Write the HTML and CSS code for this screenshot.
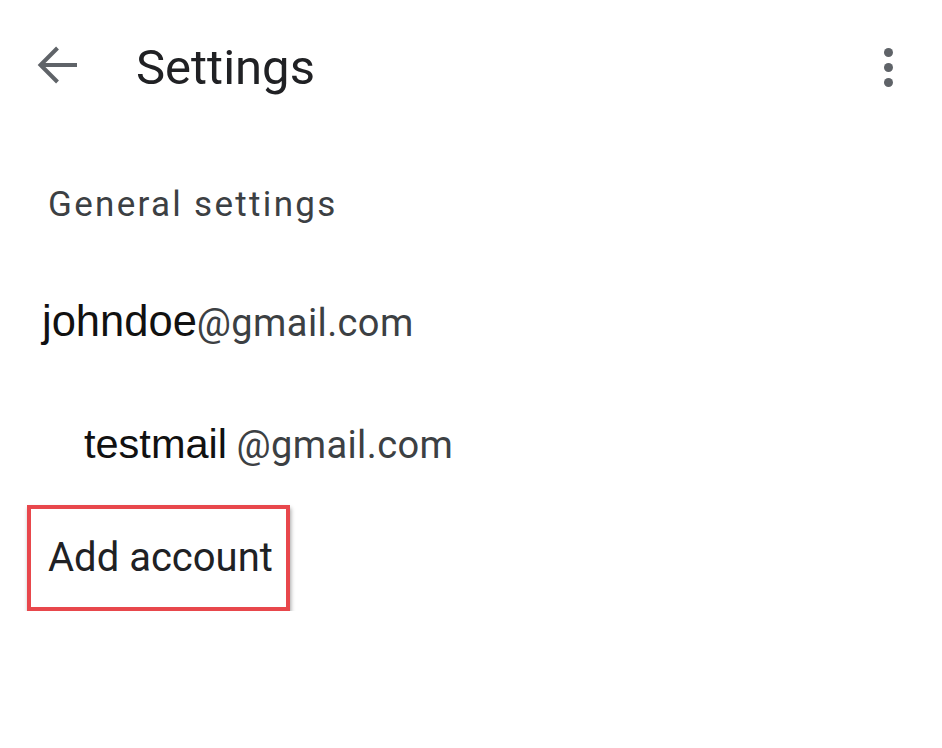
FILE: index.html
```html
<!DOCTYPE html>
<html lang="en">
<head>
    <meta charset="UTF-8">
    <meta name="viewport" content="width=device-width, initial-scale=1.0">
    <title>Settings</title>
    <link rel="stylesheet" href="styles.css">
</head>
<body>
    <div class="app-bar">
        <button class="back-button" aria-label="Back">
            <svg width="44" height="44" viewBox="0 0 44 44">
                <path d="M42 20H6M22.5 3L5.5 20L22.5 37" fill="none" stroke="#5f6368" stroke-width="4"/>
            </svg>
        </button>
        <h1 class="title">Settings</h1>
        <button class="menu-button" aria-label="More options">
            <span class="dot"></span>
            <span class="dot"></span>
            <span class="dot"></span>
        </button>
    </div>

    <div class="settings-list">
        <div class="item general">General settings</div>
        <div class="item account first"><span class="user">johndoe</span><span class="domain">@gmail.com</span></div>
        <div class="item account second"><span class="user">testmail</span> <span class="domain">@gmail.com</span></div>
        <div class="item add-account">
            <span class="highlight">Add account</span>
        </div>
    </div>
</body>
</html>
```

FILE: styles.css
```css
body {
    margin: 0;
    background-color: #fff;
    font-family: Roboto, "Noto Sans", sans-serif;
    color: #202124;
}

.app-bar {
    display: flex;
    align-items: center;
    height: 134px;
    padding: 0 42px 0 35px;
}

.back-button,
.menu-button {
    border: none;
    background: none;
    padding: 0;
    cursor: pointer;
}

.back-button {
    display: flex;
    width: 44px;
    height: 44px;
}

.title {
    margin: 0 0 0 57px;
    font-size: 49px;
    font-weight: 400;
    flex: 1;
}

.menu-button {
    display: flex;
    flex-direction: column;
    align-items: center;
    gap: 6px;
    width: 24px;
}

.dot {
    width: 9px;
    height: 9px;
    border-radius: 50%;
    background-color: #5f6368;
}

.settings-list {
    display: flex;
    flex-direction: column;
    align-items: flex-start;
}

.item {
    line-height: 1;
    color: #3c4043;
}

.general {
    font-size: 35px;
    letter-spacing: 2.3px;
    margin: 53px 0 0 48px;
}

.account {
    font-size: 38px;
}

.account.first {
    margin: 78px 0 0 42px;
}

.account.second {
    margin: 79px 0 0 84px;
}

.user {
    font-family: "Liberation Sans", Arial, sans-serif;
    color: #111;
}

.first .user {
    font-size: 43.5px;
}

.second .user {
    font-size: 41.5px;
}

.domain {
    letter-spacing: 0.4px;
}

.add-account {
    margin: 41px 0 0 27px;
}

.highlight {
    display: block;
    padding: 29px 13px 29px 17px;
    border: 4px solid #e8474c;
    box-shadow: 1px 3px 4px rgba(0, 0, 0, 0.35);
    font-size: 40px;
    color: #202124;
}
```
